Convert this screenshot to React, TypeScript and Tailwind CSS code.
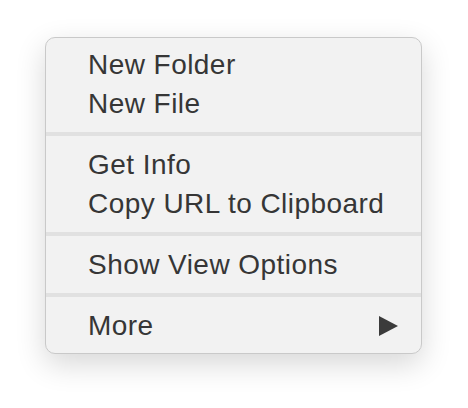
import { Fragment } from 'react';

type Item = { label: string; submenu?: boolean };

const groups: Item[][] = [
  [{ label: 'New Folder' }, { label: 'New File' }],
  [{ label: 'Get Info' }, { label: 'Copy URL to Clipboard' }],
  [{ label: 'Show View Options' }],
  [{ label: 'More', submenu: true }],
];

function MenuRow({ item }: { item: Item }) {
  return (
    <div className="flex h-[39px] items-center justify-between pl-[42px] pr-[23px] leading-[39px]">
      <span>{item.label}</span>
      {item.submenu && (
        <svg width="19" height="20" viewBox="0 0 19 20" className="text-[#3b3b3b]">
          <polygon points="0,0 19,10 0,20" fill="currentColor" />
        </svg>
      )}
    </div>
  );
}

export default function App() {
  return (
    <div className="min-h-[408px] w-[468px] bg-white pl-[45px] pt-[37px]">
      <div
        className="w-[377px] rounded-[10px] border border-[#c9c9c9] bg-[#f2f2f2] pt-[7px] pb-[8px] text-[28px] tracking-[0.45px] text-[#363636] shadow-[0_10px_30px_rgba(0,0,0,0.16)]"
        style={{ fontFamily: '"Liberation Sans", Arial, sans-serif' }}
      >
        {groups.map((group, i) => (
          <Fragment key={i}>
            {i > 0 && <div className="my-[9px] h-[4px] bg-[#e1e1e1]" />}
            {group.map((item) => (
              <MenuRow key={item.label} item={item} />
            ))}
          </Fragment>
        ))}
      </div>
    </div>
  );
}
